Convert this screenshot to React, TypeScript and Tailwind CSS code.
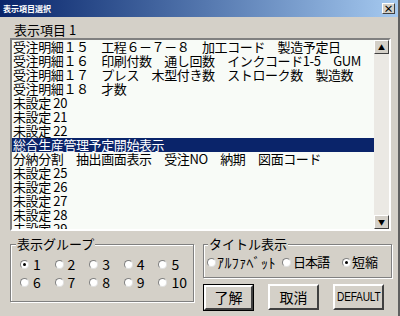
const rows = [
  "受注明細１５　工程６－７－８　加工コード　製造予定日",
  "受注明細１６　印刷付数　通し回数　インクコード1-5　GUM",
  "受注明細１７　プレス　木型付き数　ストローク数　製造数",
  "受注明細１８　才数",
  "未設定 20",
  "未設定 21",
  "未設定 22",
  "総合生産管理予定開始表示",
  "分納分割　抽出画面表示　受注NO　納期　図面コード",
  "未設定 25",
  "未設定 26",
  "未設定 27",
  "未設定 28",
  "未設定 29",
];

const Radio = ({ checked }: { checked?: boolean }) => (
  <span className="relative inline-block w-[9px] h-[9px] rounded-full bg-white border border-t-[#808080] border-l-[#808080] border-b-[#e0e0e0] border-r-[#e0e0e0] shrink-0">
    {checked && (
      <span className="absolute left-[2px] top-[2px] w-[3px] h-[3px] rounded-full bg-black" />
    )}
  </span>
);

const btn =
  "h-[26px] flex items-center justify-center bg-[#d4d0c8] border-2 border-t-white border-l-white border-b-[#404040] border-r-[#404040] text-black";

const App = () => {
  return (
    <div
      className="w-[400px] h-[316px] bg-[#d4d0c8] flex flex-col overflow-hidden border-r-2 border-r-[#606060]"
      style={{ fontFamily: '"Noto Sans CJK JP", "Noto Sans", sans-serif' }}
    >
      <div className="h-[17px] flex items-center justify-between pl-[3px] pr-[3px] bg-gradient-to-r from-[#0a246a] to-[#a6caf0]">
        <span className="text-[8px] font-bold text-white leading-none">表示項目選択</span>
        <span className="w-[13px] h-[11px] flex items-center justify-center bg-[#d4d0c8] border border-t-white border-l-white border-b-[#404040] border-r-[#404040] text-[10px] font-bold leading-none text-black">
          ×
        </span>
      </div>

      <div className="h-[21px] pl-[14px] pt-[5px] text-[13px] leading-[16px] text-black">表示項目 1</div>

      <div className="ml-[10px] mr-[7px] h-[193px] flex border-2 border-t-[#808080] border-l-[#808080] border-b-white border-r-white bg-[#f8fbf7]">
        <div className="flex-1 flex flex-col overflow-hidden text-[13px] tracking-[-0.4px] leading-[14px] text-black">
          {rows.map((r, i) => (
            <div
              key={i}
              className={
                "h-[14px] shrink-0 pl-[1px] whitespace-nowrap " +
                (i === 7 ? "bg-[#0a246a] text-white" : "")
              }
            >
              {r}
            </div>
          ))}
        </div>
        <div className="w-[15px] flex flex-col bg-[#ebe9e4]">
          <div className="h-[14px] flex items-center justify-center bg-[#d4d0c8] border border-t-white border-l-white border-b-[#404040] border-r-[#404040] text-[7px] leading-none">
            ▲
          </div>
          <div className="flex-1" />
          <div className="h-[14px] flex items-center justify-center bg-[#d4d0c8] border border-t-white border-l-white border-b-[#404040] border-r-[#404040] text-[7px] leading-none">
            ▼
          </div>
        </div>
      </div>

      <div className="flex pl-[10px] pt-[5px] gap-[9px]">
        <div className="relative w-[184px] h-[58px] mt-[8px] border border-[#808080] shadow-[inset_1px_1px_0_#ffffff,1px_1px_0_#ffffff]">
          <span className="absolute left-[5px] top-[-9px] px-[1px] bg-[#d4d0c8] text-[13px] leading-[16px] text-black">
            表示グループ
          </span>
          <div className="grid grid-cols-5 pl-[9px] pt-[11px] gap-y-[2px] text-[14px] leading-[16px] text-black">
            {[1, 2, 3, 4, 5, 6, 7, 8, 9, 10].map((n) => (
              <div key={n} className="flex items-center gap-[4px] w-[35px]">
                <Radio checked={n === 1} />
                <span>{n}</span>
              </div>
            ))}
          </div>
        </div>

        <div className="flex flex-col w-[189px]">
          <div className="relative h-[34px] mt-[8px] border border-[#808080] shadow-[inset_1px_1px_0_#ffffff,1px_1px_0_#ffffff]">
            <span className="absolute left-[4px] top-[-9px] px-[1px] bg-[#d4d0c8] text-[13px] leading-[16px] text-black">
              タイトル表示
            </span>
            <div className="flex items-center pl-[3px] pt-[9px] leading-[16px] text-black">
              <Radio />
              <span className="ml-[1px] w-[52px] text-[14px] tracking-[0.4px] whitespace-nowrap">ｱﾙﾌｧﾍﾞｯﾄ</span>
              <span className="ml-[13px] flex">
                <Radio />
              </span>
              <span className="ml-[2px] w-[36px] text-[13px] tracking-[-1px] whitespace-nowrap">日本語</span>
              <span className="ml-[13px] flex">
                <Radio checked />
              </span>
              <span className="ml-[1px] text-[13px]">短縮</span>
            </div>
          </div>
          <div className="flex mt-[6px] gap-[14px]">
            <div className="w-[51px] h-[27px] border border-black">
              <div className={btn + " w-full h-full text-[14px]"}>了解</div>
            </div>
            <div className={btn + " w-[51px] text-[14px]"}>取消</div>
            <div
              className={btn + " w-[51px] text-[13px] px-0 whitespace-nowrap"}
              style={{ fontFamily: '"Liberation Sans", sans-serif' }}
            >
              <span className="inline-block scale-x-[0.78] tracking-[-0.3px]">DEFAULT</span>
            </div>
          </div>
        </div>
      </div>
    </div>
  );
};

export default App;
